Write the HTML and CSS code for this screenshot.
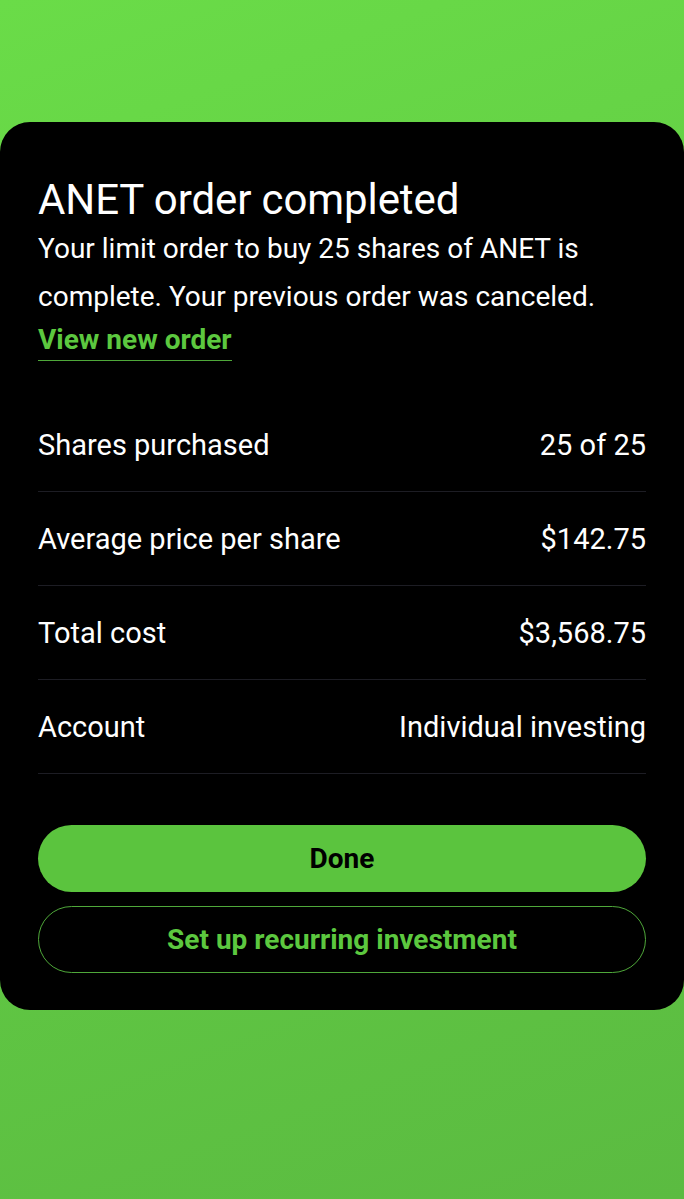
FILE: index.html
```html
<!DOCTYPE html>
<html lang="en">
<head>
    <meta charset="UTF-8">
    <meta name="viewport" content="width=device-width, initial-scale=1.0">
    <title>ANET order completed</title>
    <link rel="stylesheet" href="styles.css">
</head>
<body>

    <!-- Order sheet -->
    <main class="sheet">
        <h1 class="sheet-title">ANET order completed</h1>
        <p class="sheet-text">Your limit order to buy 25 shares of ANET is complete. Your previous order was canceled.</p>
        <a class="sheet-link" href="#">View new order</a>

        <!-- Order details -->
        <div class="details">
            <div class="detail-row">
                <span>Shares purchased</span>
                <span>25 of 25</span>
            </div>
            <div class="detail-row">
                <span>Average price per share</span>
                <span>$142.75</span>
            </div>
            <div class="detail-row">
                <span>Total cost</span>
                <span>$3,568.75</span>
            </div>
            <div class="detail-row">
                <span>Account</span>
                <span>Individual investing</span>
            </div>
        </div>

        <!-- Actions -->
        <div class="actions">
            <button class="btn btn-primary">Done</button>
            <button class="btn btn-outline">Set up recurring investment</button>
        </div>
    </main>

</body>
</html>
```

FILE: styles.css
```css
/* Global Styles */
* {
    margin: 0;
    padding: 0;
    box-sizing: border-box;
    font-family: Roboto, 'Liberation Sans', sans-serif;
}

body {
    min-height: 1199px;
    background: linear-gradient(160deg, #6adc48 0%, #62cc44 45%, #5bbb41 100%);
    color: #fff;
    padding-top: 122px;
}

/* Sheet */
.sheet {
    background: #000;
    border-radius: 30px;
    padding: 53px 38px 38px;
    height: 888px;
}

.sheet-title {
    font-size: 42px;
    font-weight: 400;
    line-height: 50px;
    letter-spacing: -0.1px;
}

.sheet-text {
    font-size: 28px;
    line-height: 48px;
    margin-top: 0;
}

.sheet-link {
    display: inline-block;
    color: #5cc83f;
    font-size: 28px;
    font-weight: 700;
    text-decoration: none;
    line-height: 38px;
    padding-bottom: 1px;
    border-bottom: 1.5px solid #4fa83a;
}

/* Details */
.details {
    margin-top: 37px;
}

.detail-row {
    display: flex;
    justify-content: space-between;
    align-items: center;
    height: 94px;
    font-size: 29px;
    border-bottom: 1px solid #1d1d24;
}

/* Actions */
.actions {
    display: flex;
    flex-direction: column;
    gap: 14px;
    margin-top: 51px;
}

.btn {
    height: 67px;
    border-radius: 34px;
    font-size: 28px;
    font-weight: 700;
    cursor: pointer;
}

.btn-primary {
    background: #5bc43e;
    color: #000;
    border: none;
}

.btn-outline {
    background: #000;
    color: #5cc83f;
    border: 1px solid #4fa83a;
}
```
